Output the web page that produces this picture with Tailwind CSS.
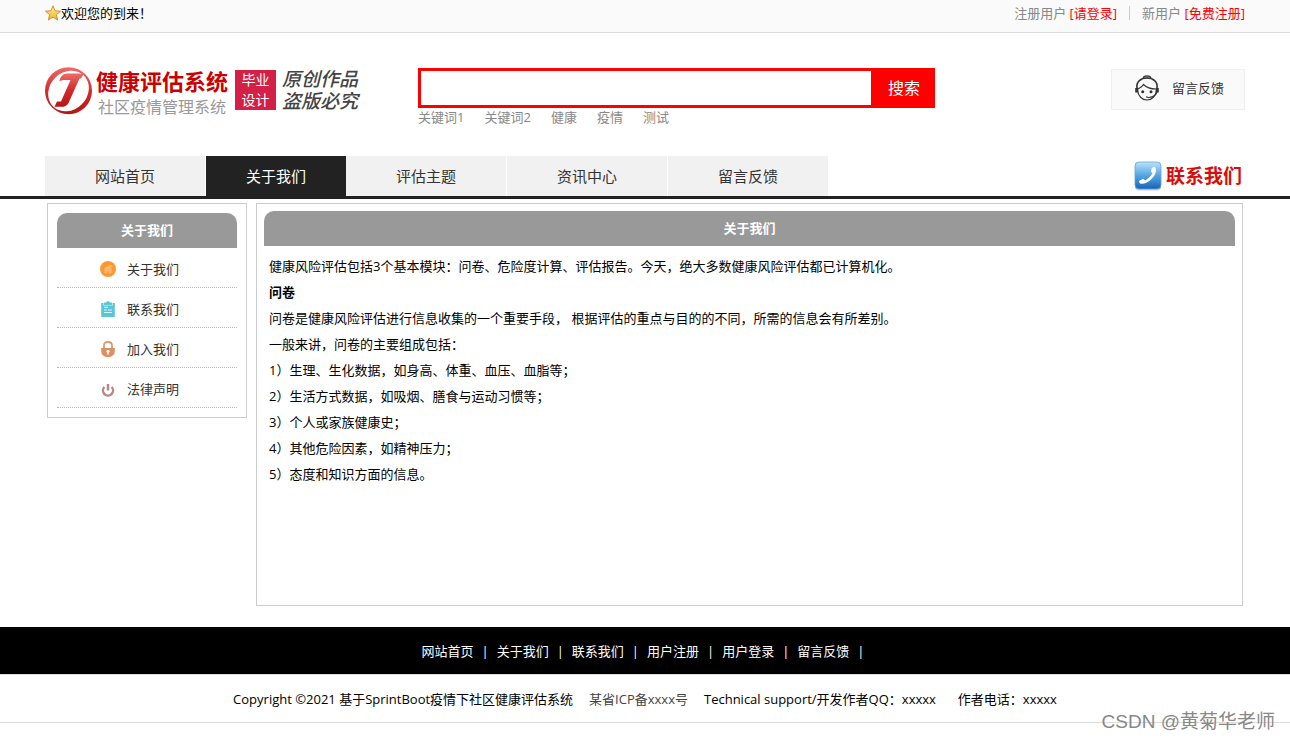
<!DOCTYPE html>
<html lang="zh-CN">
<head>
<meta charset="utf-8">
<meta name="viewport" content="width=device-width, initial-scale=1">
<title>社区疫情管理系统</title>
<script src="https://cdn.jsdelivr.net/npm/@tailwindcss/browser@4"></script>
</head>
<body class="relative min-h-screen bg-white font-['Open_Sans','Noto_Sans_CJK_SC',sans-serif] text-[13px] leading-[26px] text-black">
<header>
  <div class="border-b border-[#dddddd] bg-[#fafafa]">
    <div class="mx-auto flex h-8 max-w-[1200px] items-start justify-between">
      <p class="flex items-center">
        <svg class="size-4" viewBox="0 0 16 16" aria-hidden="true"><defs><linearGradient id="st" x1="0" y1="0" x2="0" y2="1"><stop offset="0" stop-color="#fff2a0"/><stop offset="1" stop-color="#f0b020"/></linearGradient></defs><path d="M8 .8l2.1 5 5.4.4-4.1 3.5 1.3 5.3L8 12.1 3.3 15l1.3-5.3L.5 6.2l5.4-.4z" fill="url(#st)" stroke="#c58a25" stroke-width=".9" stroke-linejoin="round"/></svg>
        <span>欢迎您的到来！</span>
      </p>
      <div class="flex items-center text-[#888888]">
        <span>注册用户 <a href="#" class="text-[#ff0000]">[请登录]</a></span>
        <span class="mx-3 h-3.5 w-px bg-[#cccccc]"></span>
        <span>新用户 <a href="#" class="text-[#ff0000]">[免费注册]</a></span>
      </div>
    </div>
  </div>

  <div class="mx-auto flex h-[123px] max-w-[1200px] items-start pt-[34px]">
    <a href="#" class="flex w-[373px] shrink-0 items-start">
      <svg class="size-12 shrink-0" viewBox="0 0 48 48" aria-hidden="true"><defs><linearGradient id="lg" x1="0" y1="0" x2="0" y2="1"><stop offset="0" stop-color="#ee6a6a"/><stop offset=".5" stop-color="#d22b2b"/><stop offset="1" stop-color="#b81414"/></linearGradient></defs><circle cx="23.5" cy="23.7" r="23.5" fill="url(#lg)"/><ellipse cx="23.500" cy="24" rx="21.800" ry="18.800" fill="#fff" transform="rotate(-45 23.500 24)"/><path d="M14.500 14.500C15 9.500 18 6.500 22 6.500h17l-3 5h-1.500L23.500 36c-1.500 3-4 3.800-7 3.800H9.500L12 34.500h4L25.500 13H21c-3 0-5 .3-6.500 1.500z" fill="url(#lg)"/></svg>
      <span class="ml-[3px] flex flex-col">
        <span class="text-[22px] leading-[28px] font-bold text-[#cc0000]">健康评估系统</span>
        <span class="pl-0.5 text-base leading-6 text-[#999999]">社区疫情管理系统</span>
      </span>
      <span class="mt-[3px] ml-[7px] flex h-10 w-[41px] flex-col items-center justify-center bg-[#d42046] text-[14px] leading-5 text-white"><span>毕业</span><span>设计</span></span>
      <span class="mt-px ml-1.5 flex flex-col text-[19px] leading-[22px] font-medium text-[#444444] italic"><span>原创作品</span><span>盗版必究</span></span>
    </a>
    <div class="w-[517px] pt-px">
      <form class="flex h-10" onsubmit="return false">
        <input type="text" aria-label="搜索关键词" class="min-w-0 flex-1 border-[3px] border-r-0 border-[#ff0000] bg-white px-2 text-base outline-none">
        <button type="submit" class="w-16 bg-[#ff0000] pl-0.5 text-base text-white">搜索</button>
      </form>
      <div class="flex gap-5 leading-[18px] text-[#888888]">
        <a href="#">关键词1</a><a href="#">关键词2</a><a href="#">健康</a><a href="#">疫情</a><a href="#">测试</a>
      </div>
    </div>
    <a href="#" class="mt-0.5 ml-auto flex h-[41px] w-[134px] items-center justify-center gap-3 border border-[#f0f0f0] bg-[#fafafa] pl-0.5 pb-1 text-[#333333]">
      <svg class="size-[26px]" viewBox="0 0 26 26" fill="none" stroke="#333" stroke-width="1.200" aria-hidden="true"><path d="M9 3.500C9.500 0 16.500 0 17 3.500" fill="#aaa"/><path d="M3 13C2 6.500 7 3 13 3s11 3.500 10 10" stroke-width="1.600"/><path d="M3.500 15c.5 6 4.500 10 9.500 10s9-4 9.500-10"/><path d="M4 14c2.500-1.200 4.500-2.700 5.500-4.500 3 3 7 4.500 12.500 4.500"/><path d="M2.700 13v4.500M23.300 13v4.500" stroke-width="3"/><circle cx="8.700" cy="16.800" r="1.500" fill="#333" stroke="none"/><circle cx="17" cy="16.800" r="1.500" fill="#333" stroke="none"/><path d="M23 17c-1 3-4 5-8 5.500M12 21.800l3 1"/></svg>
      <span>留言反馈</span>
    </a>
  </div>

  <div class="border-b-[3px] border-[#222222]">
    <div class="mx-auto flex h-10 max-w-[1200px] items-start">
      <nav class="flex text-center text-[15px] leading-10 text-[#333333]">
        <a href="#" class="mr-px w-40 bg-[#f1f1f1]">网站首页</a>
        <a href="#" class="w-[140px] bg-[#222222] text-white" aria-current="page">关于我们</a>
        <a href="#" class="mr-px w-40 bg-[#f1f1f1]">评估主题</a>
        <a href="#" class="mr-px w-40 bg-[#f1f1f1]">资讯中心</a>
        <a href="#" class="w-40 bg-[#f1f1f1]">留言反馈</a>
      </nav>
      <a href="#" class="mr-[3px] ml-auto flex h-10 items-center gap-1 text-[19px] leading-10 font-bold text-[#d90c0c]">
        <svg class="h-[30px] w-7" viewBox="0 0 28 30" aria-hidden="true"><defs><linearGradient id="ph" x1="0" y1="0" x2="0" y2="1"><stop offset="0" stop-color="#b9e3fa"/><stop offset=".5" stop-color="#54a5e2"/><stop offset="1" stop-color="#1762b5"/></linearGradient></defs><rect x="1" y="2" width="26" height="27.500" rx="4" fill="#c9cde8"/><rect x="1" y="1" width="26" height="27" rx="4" fill="url(#ph)" stroke="#6aa5d6" stroke-width=".8"/><path d="M17.500 7.500l2.200-1.700c.7-.4 1.200 0 1.600.6 1.600 3.500.2 7.600-3.600 11.300-3.600 3.600-7.600 5.600-10.700 5-.9-.2-1.700-1-2-2-.1-.7.300-1 .8-1.300l2.700-1.500c.7-.3 1.200 0 1.700.6l.9.900c3-1.200 6-4.200 7.400-7.300l-.9-.8c-.8-.7-.8-1.400-.1-2.300z" fill="#fff"/></svg>
        <span>联系我们</span>
      </a>
    </div>
  </div>
</header>

<main class="mx-auto flex max-w-[1200px] items-start gap-[9px] px-0.5 pt-1">
  <aside class="w-[200px] shrink-0 border border-[#cccccc] p-[9px]">
    <h2 class="rounded-t-[10px] bg-[#999999] text-center leading-[35px] font-bold text-white">关于我们</h2>
    <ul class="text-[#333333]">
      <li class="border-b border-dotted border-[#bbbbbb]"><a href="#" class="flex h-[39px] items-center gap-[11px] pt-0.5 pl-[43px]">
        <svg class="size-4" viewBox="0 0 16 16" aria-hidden="true"><circle cx="8" cy="8" r="8" fill="#ff9830"/><path d="M5 12V8l4-1.500 2 1V12H9.200V9.500H6.800V12zM4.200 7.700L10 4.500l1.800.2v1.500" fill="#ffb060" stroke="#ffc68b" stroke-width=".7"/></svg><span>关于我们</span></a></li>
      <li class="border-b border-dotted border-[#bbbbbb]"><a href="#" class="flex h-[39px] items-center gap-[11px] pt-0.5 pl-[43px]">
        <svg class="size-4" viewBox="0 0 16 16" aria-hidden="true"><path d="M1.200 2h13.600v14H1.200z" fill="#59c5d6"/><path d="M3.500 1.500v2.700h9V1.500" fill="none" stroke="#d9f4f7" stroke-width=".7"/><path d="M4.200 3.700V1.500h2C6.500-.3 9.500-.3 9.800 1.500h2v2.200z" fill="#59c5d6"/><path d="M4 6.300h4M4 9h3M4 11.500h8M8 9h4" stroke="#d9f4f7" stroke-width="1.100"/></svg><span>联系我们</span></a></li>
      <li class="border-b border-dotted border-[#bbbbbb]"><a href="#" class="flex h-[39px] items-center gap-[11px] pt-0.5 pl-[43px]">
        <svg class="size-4" viewBox="0 0 16 16" aria-hidden="true"><path d="M4 8V4.500C4 2 5 1 8 1s4 1 4 3.500V8" fill="none" stroke="#e09670" stroke-width="1.800"/><path d="M1.200 7h13.600v3c0 4-3 6-6.800 6s-6.800-2-6.800-6z" fill="#df8f66"/><circle cx="8" cy="10.200" r="1.500" fill="#fff"/><path d="M7.300 10.500h1.400v3H7.300z" fill="#fff"/></svg><span>加入我们</span></a></li>
      <li class="border-b border-dotted border-[#bbbbbb]"><a href="#" class="flex h-[39px] items-center gap-[11px] pt-0.5 pl-[43px]">
        <svg class="size-4" viewBox="0 0 16 16" fill="none" stroke="#b98585" stroke-width="2.400" aria-hidden="true"><path d="M4.400 6a5 5 0 1 0 7.200 0M8 3v6.500"/></svg><span>法律声明</span></a></li>
    </ul>
  </aside>

  <section class="min-h-[403px] min-w-0 flex-1 border border-[#cccccc] p-[7px]">
    <h1 class="rounded-t-[10px] bg-[#999999] text-center leading-[35px] font-bold text-white">关于我们</h1>
    <div class="px-[5px] pt-[7px]">
      <p>健康风险评估包括3个基本模块：问卷、危险度计算、评估报告。今天，绝大多数健康风险评估都已计算机化。</p>
      <p class="font-bold">问卷</p>
      <p>问卷是健康风险评估进行信息收集的一个重要手段， 根据评估的重点与目的的不同，所需的信息会有所差别。</p>
      <p>一般来讲，问卷的主要组成包括：</p>
      <p>1）生理、生化数据，如身高、体重、血压、血脂等；</p>
      <p>2）生活方式数据，如吸烟、膳食与运动习惯等；</p>
      <p>3）个人或家族健康史；</p>
      <p>4）其他危险因素，如精神压力；</p>
      <p>5）态度和知识方面的信息。</p>
    </div>
  </section>
</main>

<footer class="mt-[21px]">
  <nav class="flex h-[47px] items-center justify-center bg-black pr-1 text-white">
    <ul class="flex gap-2">
      <li class="flex gap-2"><a href="#">网站首页</a><span>|</span></li>
      <li class="flex gap-2"><a href="#">关于我们</a><span>|</span></li>
      <li class="flex gap-2"><a href="#">联系我们</a><span>|</span></li>
      <li class="flex gap-2"><a href="#">用户注册</a><span>|</span></li>
      <li class="flex gap-2"><a href="#">用户登录</a><span>|</span></li>
      <li class="flex gap-2"><a href="#">留言反馈</a><span>|</span></li>
    </ul>
  </nav>
  <div class="flex h-[49px] items-center justify-center border-y border-[#dddddd]">
    <span>Copyright ©2021 基于SprintBoot疫情下社区健康评估系统</span>
    <a href="#" class="ml-4 text-[#444444]">某省ICP备xxxx号</a>
    <span class="ml-4">Technical support/开发作者QQ：xxxxx</span>
    <span class="ml-[22px]">作者电话：xxxxx</span>
  </div>
</footer>
<div class="absolute top-[709px] right-[15px] font-['Liberation_Sans','Noto_Sans_CJK_SC',sans-serif] text-[19px] text-[#888888]">CSDN @黄菊华老师</div>
</body>
</html>
